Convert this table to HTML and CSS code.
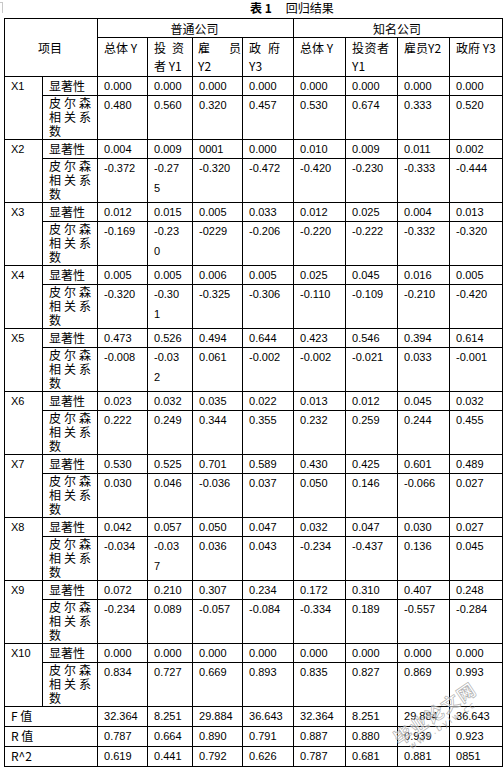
FILE: index.html
```html
<!DOCTYPE html>
<html lang="zh">
<head>
<meta charset="utf-8">
<title>表1 回归结果</title>
<link rel="stylesheet" href="styles.css">
</head>
<body>
<div class="page">
  <span class="corner"></span>
  <div class="title"><b>表 1</b><span class="tname">回归结果</span></div>
  <table class="reg">
    <colgroup>
      <col class="c-x"><col class="c-lab"><col class="c50"><col class="c45"><col class="c50"><col class="c51"><col class="c52"><col class="c52"><col class="c52"><col class="c53">
    </colgroup>
    <thead>
      <tr class="h1">
        <th colspan="2" rowspan="2" class="item">项目</th>
        <th colspan="4" class="grp">普通公司</th>
        <th colspan="4" class="grp">知名公司</th>
      </tr>
      <tr class="h2">
        <th class="hd one">总体 Y</th>
        <th class="hd"><span class="jl">投资</span>者 Y1</th>
        <th class="hd wide"><span class="jl">雇员</span>Y2</th>
        <th class="hd narrow"><span class="jl">政府</span>Y3</th>
        <th class="hd one">总体 Y</th>
        <th class="hd">投资者 Y1</th>
        <th class="hd one">雇员Y2</th>
        <th class="hd one">政府 Y3</th>
      </tr>
    </thead>
    <tbody>
      <tr class="sig"><th rowspan="2" class="xv">X1</th><th class="lab">显著性</th><td>0.000</td><td>0.000</td><td>0.000</td><td>0.000</td><td>0.000</td><td>0.000</td><td>0.000</td><td>0.000</td></tr>
      <tr class="pear"><th class="lab multi">皮尔森相关系数</th><td>0.480</td><td>0.560</td><td>0.320</td><td>0.457</td><td>0.530</td><td>0.674</td><td>0.333</td><td>0.520</td></tr>

      <tr class="sig"><th rowspan="2" class="xv">X2</th><th class="lab">显著性</th><td>0.004</td><td>0.009</td><td>0001</td><td>0.000</td><td>0.010</td><td>0.009</td><td>0.011</td><td>0.002</td></tr>
      <tr class="pear"><th class="lab multi">皮尔森相关系数</th><td>-0.372</td><td>-0.275</td><td>-0.320</td><td>-0.472</td><td>-0.420</td><td>-0.230</td><td>-0.333</td><td>-0.444</td></tr>

      <tr class="sig"><th rowspan="2" class="xv">X3</th><th class="lab">显著性</th><td>0.012</td><td>0.015</td><td>0.005</td><td>0.033</td><td>0.012</td><td>0.025</td><td>0.004</td><td>0.013</td></tr>
      <tr class="pear"><th class="lab multi">皮尔森相关系数</th><td>-0.169</td><td>-0.230</td><td>-0229</td><td>-0.206</td><td>-0.220</td><td>-0.222</td><td>-0.332</td><td>-0.320</td></tr>

      <tr class="sig"><th rowspan="2" class="xv">X4</th><th class="lab">显著性</th><td>0.005</td><td>0.005</td><td>0.006</td><td>0.005</td><td>0.025</td><td>0.045</td><td>0.016</td><td>0.005</td></tr>
      <tr class="pear"><th class="lab multi">皮尔森相关系数</th><td>-0.320</td><td>-0.301</td><td>-0.325</td><td>-0.306</td><td>-0.110</td><td>-0.109</td><td>-0.210</td><td>-0.420</td></tr>

      <tr class="sig"><th rowspan="2" class="xv">X5</th><th class="lab">显著性</th><td>0.473</td><td>0.526</td><td>0.494</td><td>0.644</td><td>0.423</td><td>0.546</td><td>0.394</td><td>0.614</td></tr>
      <tr class="pear"><th class="lab multi">皮尔森相关系数</th><td>-0.008</td><td>-0.032</td><td>0.061</td><td>-0.002</td><td>-0.002</td><td>-0.021</td><td>0.033</td><td>-0.001</td></tr>

      <tr class="sig"><th rowspan="2" class="xv">X6</th><th class="lab">显著性</th><td>0.023</td><td>0.032</td><td>0.035</td><td>0.022</td><td>0.013</td><td>0.012</td><td>0.045</td><td>0.032</td></tr>
      <tr class="pear"><th class="lab multi">皮尔森相关系数</th><td>0.222</td><td>0.249</td><td>0.344</td><td>0.355</td><td>0.232</td><td>0.259</td><td>0.244</td><td>0.455</td></tr>

      <tr class="sig"><th rowspan="2" class="xv">X7</th><th class="lab">显著性</th><td>0.530</td><td>0.525</td><td>0.701</td><td>0.589</td><td>0.430</td><td>0.425</td><td>0.601</td><td>0.489</td></tr>
      <tr class="pear"><th class="lab multi">皮尔森相关系数</th><td>0.030</td><td>0.046</td><td>-0.036</td><td>0.037</td><td>0.050</td><td>0.146</td><td>-0.066</td><td>0.027</td></tr>

      <tr class="sig"><th rowspan="2" class="xv">X8</th><th class="lab">显著性</th><td>0.042</td><td>0.057</td><td>0.050</td><td>0.047</td><td>0.032</td><td>0.047</td><td>0.030</td><td>0.027</td></tr>
      <tr class="pear"><th class="lab multi">皮尔森相关系数</th><td>-0.034</td><td>-0.037</td><td>0.036</td><td>0.043</td><td>-0.234</td><td>-0.437</td><td>0.136</td><td>0.045</td></tr>

      <tr class="sig"><th rowspan="2" class="xv">X9</th><th class="lab">显著性</th><td>0.072</td><td>0.210</td><td>0.307</td><td>0.234</td><td>0.172</td><td>0.310</td><td>0.407</td><td>0.248</td></tr>
      <tr class="pear"><th class="lab multi">皮尔森相关系数</th><td>-0.234</td><td>0.089</td><td>-0.057</td><td>-0.084</td><td>-0.334</td><td>0.189</td><td>-0.557</td><td>-0.284</td></tr>

      <tr class="sig"><th rowspan="2" class="xv">X10</th><th class="lab">显著性</th><td>0.000</td><td>0.000</td><td>0.000</td><td>0.000</td><td>0.000</td><td>0.000</td><td>0.000</td><td>0.000</td></tr>
      <tr class="pear"><th class="lab multi">皮尔森相关系数</th><td>0.834</td><td>0.727</td><td>0.669</td><td>0.893</td><td>0.835</td><td>0.827</td><td>0.869</td><td>0.993</td></tr>

      <tr class="stat"><th colspan="2" class="sv">F 值</th><td>32.364</td><td>8.251</td><td>29.884</td><td>36.643</td><td>32.364</td><td>8.251</td><td>29.884</td><td>36.643</td></tr>
      <tr class="stat"><th colspan="2" class="sv">R 值</th><td>0.787</td><td>0.664</td><td>0.890</td><td>0.791</td><td>0.887</td><td>0.880</td><td>0.939</td><td>0.923</td></tr>
      <tr class="stat last"><th colspan="2" class="sv">R^2</th><td>0.619</td><td>0.441</td><td>0.792</td><td>0.626</td><td>0.787</td><td>0.681</td><td>0.881</td><td>0851</td></tr>
    </tbody>
  </table>
  <div class="wm">
    <span class="wm-name">毕业论文网</span>
    <span class="wm-url">www.bylw.cc</span>
  </div>
</div>
</body>
</html>
```

FILE: styles.css
```css
html, body {
  margin: 0;
  padding: 0;
  background: #fff;
}

body {
  font-family: "Liberation Sans", "Noto Sans CJK SC", sans-serif;
  color: #000;
}

.page {
  position: relative;
  width: 503px;
  height: 768px;
  overflow: hidden;
}

.corner {
  position: absolute;
  left: 0;
  top: 2px;
  width: 2px;
  height: 10px;
  border-right: 1px solid #c8c8c8;
  border-top: 1px solid #c8c8c8;
}

.title {
  height: 18px;
  padding-left: 250px;
  font-family: "Noto Sans CJK SC", sans-serif;
  font-size: 12px;
  line-height: 15px;
  white-space: nowrap;
}

.title b {
  font-weight: bold;
}

.tname {
  margin-left: 14px;
}

.reg {
  margin-left: 4px;
  width: 499px;
  border-collapse: collapse;
  table-layout: fixed;
}

.c-x { width: 38px; }
.c-lab { width: 55px; }
.c45 { width: 45px; }
.c50 { width: 50px; }
.c51 { width: 51px; }
.c52 { width: 52px; }
.c53 { width: 53px; }

.reg th,
.reg td {
  border: 1px solid #000;
  padding: 0 8px 0 6px;
  vertical-align: top;
  text-align: left;
  font-weight: normal;
  overflow-wrap: anywhere;
  overflow: hidden;
}

.reg td {
  font-size: 11px;
  line-height: 18px;
}

.reg .pear td {
  line-height: 19.5px;
}

.h1 { height: 19px; }
.h2 { height: 39px; }
.sig { height: 19px; }
.pear { height: 44px; }
.stat { height: 20px; }
.stat.last { height: 20px; }

.reg th.item,
.reg th.grp {
  text-align: center;
  vertical-align: middle;
  font-family: "Noto Sans CJK SC", sans-serif;
  font-size: 12px;
  line-height: 17px;
}

.reg th.hd {
  font-family: "Noto Sans CJK SC", sans-serif;
  font-size: 12px;
  line-height: 18px;
  padding-top: 1px;
  text-align: justify;
}

.reg th.one {
  white-space: nowrap;
}

.jl {
  display: block;
  text-align: justify;
  text-align-last: justify;
}

.reg th.wide {
  padding-left: 5px;
  padding-right: 1px;
}

.reg th.narrow {
  padding-right: 13px;
}

.reg th.xv {
  font-size: 11px;
  line-height: 18px;
}

.reg th.lab {
  font-family: "Noto Sans CJK SC", sans-serif;
  font-size: 12px;
  line-height: 17px;
  padding: 0 6px;
  text-align: justify;
}

.reg th.multi {
  line-height: 14px;
  padding-top: 0;
}

.reg th.sv {
  font-family: "Noto Sans CJK SC", sans-serif;
  font-size: 12px;
  line-height: 18px;
}

.wm {
  position: absolute;
  left: 372px;
  top: 702px;
  width: 130px;
  display: flex;
  flex-direction: column;
  align-items: center;
  transform: rotate(-34deg);
  pointer-events: none;
}

.wm-name {
  font-family: "Noto Sans CJK SC", sans-serif;
  font-weight: bold;
  font-size: 18px;
  line-height: 20px;
  letter-spacing: 1px;
  color: rgba(255, 255, 255, 0.55);
  -webkit-text-stroke: 0.7px rgba(150, 150, 150, 0.75);
}

.wm-url {
  font-family: "DejaVu Sans", sans-serif;
  font-size: 9px;
  line-height: 10px;
  letter-spacing: 2px;
  color: rgba(170, 170, 170, 0.8);
}
```
